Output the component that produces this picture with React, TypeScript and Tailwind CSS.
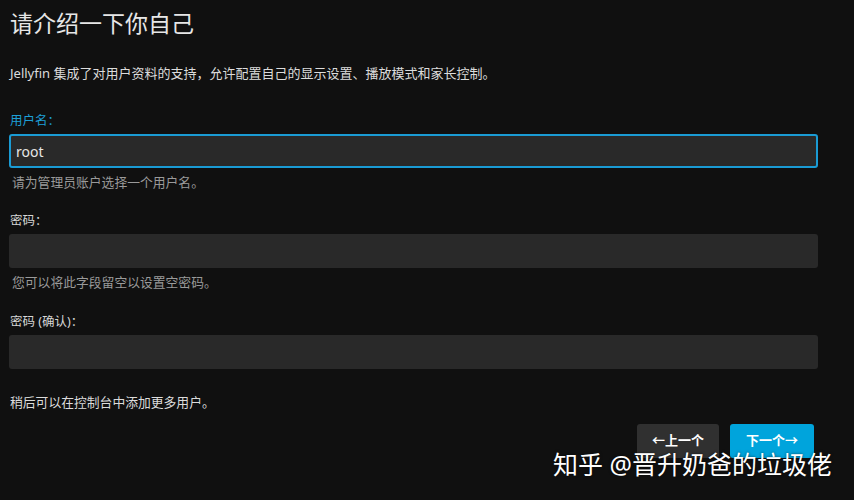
import React from "react";

const Field = ({
  label,
  value,
  help,
  active,
}: {
  label: string;
  value?: string;
  help?: string;
  active?: boolean;
}) => (
  <div className="flex flex-col">
    <label
      className={`h-[20px] leading-[20px] text-[12.5px] pl-[1px] ${
        active ? "text-[#1d9fd6]" : "text-[#d6d6d6]"
      }`}
    >
      {label}
    </label>
    <div
      className={`mt-[3px] h-[34px] rounded-[3px] bg-[#292929] flex items-center px-[5px] text-[14px] text-[#e6e6e6] ${
        active ? "border-2 border-[#1a9bd4]" : ""
      }`}
    >
      {value}
    </div>
    {help && (
      <div className="mt-[4px] h-[20px] leading-[20px] text-[12.8px] text-[#9a9a9a] pl-[3px]">{help}</div>
    )}
  </div>
);

export default function App() {
  return (
    <div
      className="relative w-[854px] h-[500px] overflow-hidden bg-[#101010]"
      style={{ fontFamily: '"Noto Sans", "Noto Sans CJK SC", sans-serif' }}
    >
      <div className="w-[809px] ml-[9px] pt-[7px] flex flex-col">
        <h1 className="h-[32px] leading-[32px] text-[23px] text-[#e6e6e6] pl-[1px]">请介绍一下你自己</h1>
        <p className="mt-[24px] h-[20px] leading-[20px] text-[13px] text-[#dcdcdc] pl-[1px]">
          Jellyfin 集成了对用户资料的支持，允许配置自己的显示设置、播放模式和家长控制。
        </p>
        <div className="mt-[28px]">
          <Field label="用户名：" value="root" help="请为管理员账户选择一个用户名。" active />
        </div>
        <div className="mt-[19px]">
          <Field label="密码：" help="您可以将此字段留空以设置空密码。" />
        </div>
        <div className="mt-[20px]">
          <Field label="密码 (确认)：" />
        </div>
        <p className="mt-[23px] h-[20px] leading-[20px] text-[12.8px] text-[#dcdcdc] pl-[1px]">
          稍后可以在控制台中添加更多用户。
        </p>
        <div className="mt-[12px] flex justify-end gap-[11px] pr-[4px]">
          <button className="w-[82px] h-[34px] rounded-[3px] bg-[#303030] text-white text-[13px] font-bold">
            ←上一个
          </button>
          <button className="w-[84px] h-[34px] rounded-[3px] bg-[#00a4dc] text-white text-[13px] font-bold">
            下一个→
          </button>
        </div>
      </div>
      <div
        className="absolute left-[553px] top-[446px] text-[25px] leading-[36px] text-white whitespace-nowrap"
        style={{ textShadow: "0 0 3px rgba(0,0,0,0.6)" }}
      >
        知乎 @晋升奶爸的垃圾佬
      </div>
    </div>
  );
}
